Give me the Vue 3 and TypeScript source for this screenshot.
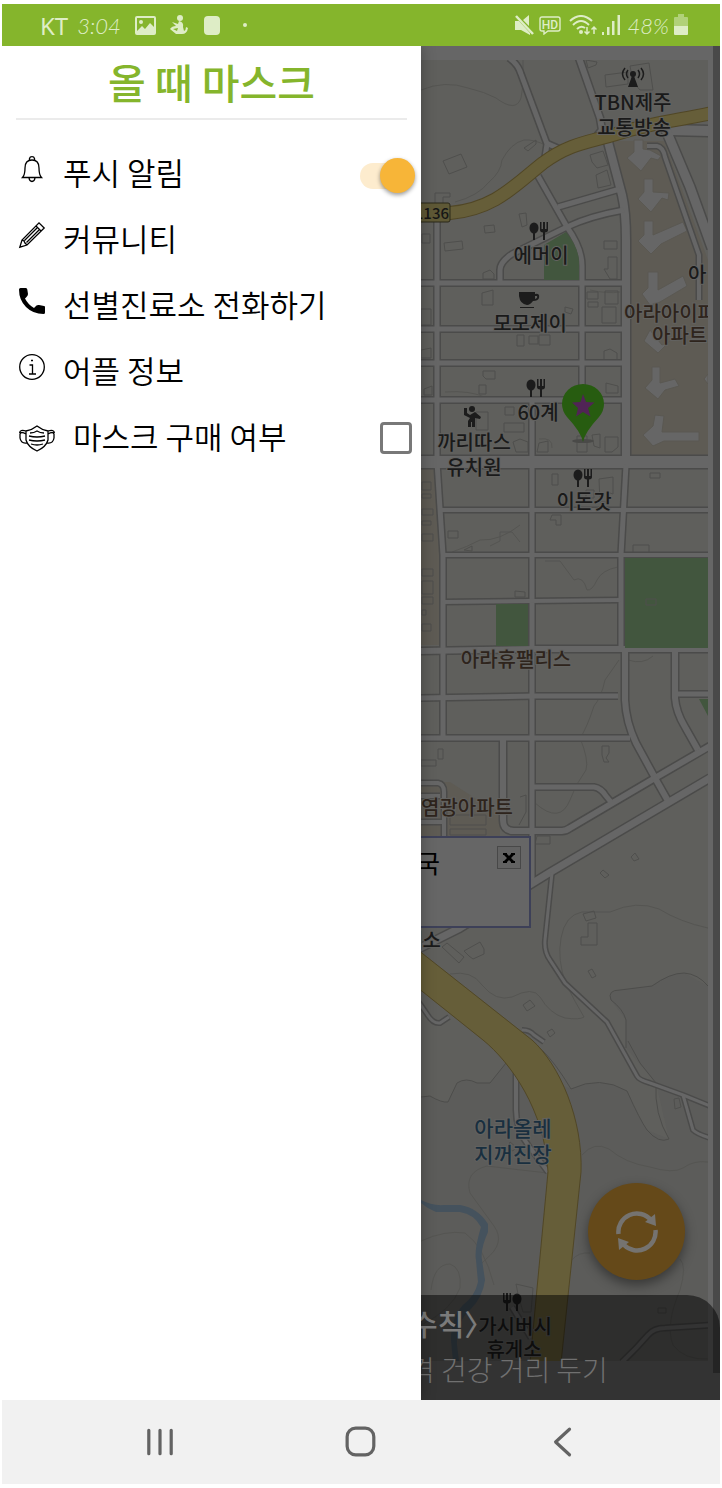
<script setup lang="ts">
import { ref } from 'vue'

interface Line { d: string; w: number }
interface Label { x: number; y: number; t: string; kind?: string; anchor?: string }
interface Poi { x: number; y: number; flip?: boolean }

const push = ref(true)
const bought = ref(false)

const roads: Line[] = [
  { d: 'M509 58Q518 64 521 74L547 144L544 164', w: 5 },
  { d: 'M546 143L562 150', w: 5 },
  { d: 'M579 58L600 118L602 130L592 142', w: 6 },
  { d: 'M608 142L622 195Q626 212 626 240V462', w: 8 },
  { d: 'M670 130L710 131', w: 10 },
  { d: 'M666 130L690 187L712 248', w: 9 },
  { d: 'M647 146H657Q663 147 665 157L699 255V300', w: 4 },
  { d: 'M538 176L567 227Q582 248 582 266V400', w: 5 },
  { d: 'M558 207L620 189', w: 5 },
  { d: 'M500 283V270Q500 262 512 254L567 227Q590 216 624 210', w: 5 },
  { d: 'M418 283H627', w: 5 },
  { d: 'M437 215V462L443 555V737', w: 5 },
  { d: 'M418 329H625M418 363H625M418 400H625', w: 5 },
  { d: 'M418 462H710', w: 12 },
  { d: 'M532 400V880', w: 5 },
  { d: 'M626 465L621 555V648', w: 5 },
  { d: 'M440 510H710M442 555H710M443 602L620 600', w: 4 },
  { d: 'M418 651L535 649H710', w: 6 },
  { d: 'M418 698L535 696H618M418 738H630', w: 5 },
  { d: 'M625 650V700Q626 722 636 743L654 776', w: 6 },
  { d: 'M675 650V698Q676 712 685 727L698 750', w: 6 },
  { d: 'M678 694H710', w: 5 },
  { d: 'M503 738V820Q503 831 514 831H562Q566 831 570 828L655 778L710 746', w: 6 },
  { d: 'M532 787H594Q601 788 606 796L611 802', w: 5 },
  { d: 'M655 778L668 801', w: 6 },
  { d: 'M416 950L460 928L549 873L710 778', w: 7 },
  { d: 'M418 783H438Q444 784 444 792V836M444 822H420M420 796H440', w: 4 },
  { d: 'M552 873L545 940Q544 952 550 960L565 983L607 1022L637 1076Q639 1080 650 1083L683 1095L710 1106', w: 3 },
  { d: 'M683 1095L693 1130Q697 1134 710 1138', w: 3 },
  { d: 'M416 998L427 1014Q433 1024 440 1023L449 1017', w: 3 },
  { d: 'M522 1030Q530 1030 534 1035L544 1042', w: 3 },
  { d: 'M516 1068V1110Q516 1130 528 1145L548 1172', w: 4 },
  { d: 'M710 1325L665 1328Q654 1328 648 1335Q636 1349 622 1362', w: 4 },
  { d: 'M512 1307L531 1338', w: 4 },
]

const contours: string[] = [
  'M421 90Q445 80 468 88Q485 92 496 98Q516 113 521 98Q524 85 523 70V60',
  'M455 202Q478 196 489 182Q501 172 502 160Q511 143 524 140Q534 139 547 146',
  'M452 552Q467 547 480 540Q500 541 520 525',
  'M545 561H560L574 580Q583 575 587 590Q592 591 597 580Q602 570 618 567',
  'M619 660L605 680Q601 698 594 706Q586 730 580 738Q589 760 586 770Q575 785 570 800Q560 825 535 803',
  'M450 974Q472 970 482 985Q496 1002 512 997Q533 986 540 997Q550 1014 565 1018Q580 1020 584 1017Q575 1002 566 984Q557 960 561 938Q565 915 582 912H610Q637 900 659 909Q680 922 708 928',
  'M582 1155Q594 1141 609 1149Q625 1163 650 1167Q673 1174 683 1168Q694 1160 708 1162',
  'M548 1173Q520 1170 487 1166Q464 1172 470 1193L494 1226Q506 1243 486 1259Q475 1266 481 1290',
  'M421 1241Q445 1230 465 1233Q484 1246 494 1285M431 1290Q434 1264 450 1264Q462 1268 460 1288Q452 1310 421 1325',
  'M572 1260Q578 1252 590 1253M680 1259Q687 1266 680 1290Q665 1325 673 1345Q684 1360 708 1359',
  'M590 290Q608 294 620 292M445 392Q470 390 487 398M539 439Q553 437 552 448M490 546L500 541V532H512L520 542',
  'M628 660Q643 665 653 656',
]
const ridges: string[] = [
  'M421 1097L430 1096Q442 1103 448 1102L457 1083Q466 1077 477 1083H490L506 1063',
  'M540 1048Q555 1062 571 1089Q600 1075 627 1091Q640 1120 647 1130Q659 1144 669 1139Q654 1114 656 1083L640 1063L628 1041',
  'M626 1048V1020Q623 1009 611 1000Q607 990 620 990L652 986Q670 973 684 973Q698 974 708 986',
]

const buildings: string[] = [
  'M443 161L461 154L467 167L449 174Z', 'M435 199V193H450V197H443V205H435Z', 'M519 214L526 213L527 225L522 227Z', 'M484 226L494 225L495 232L485 233Z',
  'M444 243L462 241L463 249L445 251Z', 'M483 273L490 270L494 274V279H483Z', 'M524 148L536 140V144L528 151Z', 'M605 75L628 72V84L606 87ZM630 66L649 63L653 90H640L633 82Z',
  'M586 60L597 62L596 65L588 68Z', 'M590 155L603 151L608 165L597 168L592 162ZM596 175L607 170L611 185L598 188Z', 'M604 241H617V249H604Z', 'M608 257H617V279H610L604 269H608Z',
  'M482 293L493 290V305H482Z', 'M587 292H598V299H587ZM588 302H598V307H588ZM605 291H618V304H605Z', 'M602 307H616V323H602Z', 'M565 307L573 309L571 314L565 312Z',
  'M517 335H524V346H517ZM529 336H538V344H529ZM539 335H550V345H539Z', 'M604 351L610 349L617 353V360H604Z', 'M483 371H495V379H486L483 376ZM479 385H486V394H479Z', 'M606 383L618 386V393H606Z',
  'M476 412H488V430H476ZM505 407H514V415H505ZM504 423H524V432H504ZM513 442L520 439L528 442V452H516Z', 'M539 443L548 441V452H537Z', 'M577 436H587V452H577ZM592 435L600 434V448L594 446ZM605 437H618V447L612 452H605Z',
  'M552 474H558V485H552ZM599 479L613 477V494L607 492V502H600ZM586 490H594V498H586Z', 'M650 473H660V478H650Z', 'M552 515H561V525H556V520H550ZM448 531H458V538H448ZM464 550L472 546V551Z', 'M633 545H649V553H633Z',
  'M515 591L525 592V597H515Z', 'M422 569H433V576H422ZM422 581H433V594H422ZM422 597H433V604H422ZM422 610H426V615H422ZM422 624H431V631H422Z', 'M422 482H431V490H422ZM422 494H431V498H422ZM422 509H433V515H422ZM422 521H431V525H422ZM422 534H433V541H422Z',
  'M438 749H443V759H438ZM421 760H436V766H421Z', 'M602 746H609V753L606 758L609 762H604L602 755Z', 'M450 815H486V825H450ZM450 829H486V835H450Z', 'M520 797L526 795V812L519 825',
  'M635 853L639 859L634 861L631 857ZM603 870L609 875L605 878L600 873Z', 'M537 836L550 836V844H535Z', 'M583 914L594 911L596 918L586 921ZM588 923H597V945H581V937H588Z', 'M442 947L447 943L464 957L459 963Z', 'M464 951L480 942L484 949L484 954L473 959L469 956Z',
  'M588 971L592 969L596 976L592 978ZM523 1005L530 1000L535 1006L527 1011ZM547 1032L552 1029L555 1033L550 1037Z', 'M674 1099L679 1098L681 1107L675 1109Z', 'M658 1308H666V1313H658Z', 'M516 1284L533 1288L531 1312H523L518 1294Z', 'M421 309H431V325H421ZM421 350L431 348V358H421ZM424 389L432 386V395H424Z', 'M422 234H430V243H422Z', 'M510 1142L516 1147L513 1151L508 1148Z',
]
const towers: string[] = [
  'M634 140H643V149L650 150L661 156L658 160L651 158L641 171L627 158L634 152Z',
  'M644 179H653V192L669 193L668 200L662 198L651 212L638 199L644 192Z',
  'M644 221H653V235L683 222L687 231L661 244L651 254L638 241L644 235Z',
  'M648 272H658V290L683 276L687 286L660 302L650 305L642 294L648 288Z',
  'M652 367H660V383L675 379L679 386L665 390L658 399L645 388L652 380Z',
  'M655 415L664 416L662 432H699V441H664L653 446L643 435L653 426Z',
  'M650 330L662 345L670 341L658 353L644 341Z',
  'M708 374L704 379L708 384Z',
]

const labels: Label[] = [
  { x: 633, y: 110, t: 'TBN제주' }, { x: 634, y: 135, t: '교통방송' }, { x: 541, y: 263, t: '에머이' },
  { x: 530, y: 331, t: '모모제이' }, { x: 538, y: 420, t: '60계' }, { x: 474, y: 450, t: '까리따스' }, { x: 474, y: 475, t: '유치원' },
  { x: 584, y: 509, t: '이돈갓' }, { x: 688, y: 282, t: '아', anchor: 'start' },
  { x: 624, y: 321, t: '아라아이파', kind: 'brown', anchor: 'start' }, { x: 652, y: 343, t: '아파트', kind: 'brown', anchor: 'start' },
  { x: 516, y: 667, t: '아라휴팰리스', kind: 'brown' }, { x: 421, y: 815, t: '염광아파트', kind: 'brown', anchor: 'start' },
  { x: 441, y: 948, t: '휴게소', anchor: 'end' },
  { x: 513, y: 1136, t: '아라올레', kind: 'blue' }, { x: 513, y: 1162, t: '지꺼진장', kind: 'blue' },
  { x: 515, y: 1334, t: '가시버시' }, { x: 514, y: 1357, t: '휴게소' },
]
const diners: Poi[] = [{ x: 529, y: 222 }, { x: 526, y: 379 }, { x: 573, y: 469 }, { x: 502, y: 1293, flip: true }]
</script>

<template>
  <div class="phone">
    <header class="status">
      <div class="status-side">
        <span class="carrier">KT</span>
        <span class="clock">3:04</span>
        <svg class="s-picture" viewBox="0 0 21 19" aria-hidden="true"><path fill-rule="evenodd" d="M2 0H19Q21 0 21 2V17Q21 19 19 19H2Q0 19 0 17V2Q0 0 2 0ZM2 2V15L7 10L10 13L15 7L19 11V2Z" /><circle cx="6" cy="6" r="2" /></svg>
        <svg class="s-figure" viewBox="0 0 18 20" aria-hidden="true"><circle cx="10" cy="3" r="3" /><path d="M9 6Q14 7 13 12L14 16Q16 15 16 12L18 13Q17 19 12 19H6L0 14Q2 11 6 11L2 7L8 9ZM3 14L7 16L8 13Z" fill-rule="evenodd" /></svg>
        <svg class="s-card" viewBox="0 0 16 19" aria-hidden="true"><rect width="16" height="19" rx="4" /></svg>
        <i class="dot"></i>
      </div>
      <div class="status-side">
        <svg class="s-mute" viewBox="0 0 19 21" aria-hidden="true"><path d="M0 6H4L15 18V20L6 15H0ZM8 5L14 0V11Z" /><path d="M1 1L18 19" stroke="#deedc6" stroke-width="2.500" /></svg>
        <svg class="s-hd" viewBox="0 0 22 19" aria-hidden="true"><path d="M3 1H19Q21 1 21 3V13Q21 15 19 15H9L5 18V15H3Q1 15 1 13V3Q1 1 3 1Z" fill="none" stroke="#deedc6" stroke-width="1.4" /><text x="11" y="13" text-anchor="middle">HD</text></svg>
        <svg class="s-wifi" viewBox="0 0 28 21" aria-hidden="true"><g fill="none" stroke="#deedc6" stroke-width="2"><path d="M1 6Q12 -4 23 6M4 10Q12 2 20 10M8 14Q12 10 16 13" /><path d="M18 12V19M15.500 16.500L18 19L20.500 16.500M25 19V12M22.500 14.500L25 12L27.500 14.500" stroke-width="1.5" /></g><circle cx="12" cy="17" r="2" /></svg>
        <svg class="s-signal" viewBox="0 0 18 20" aria-hidden="true"><path d="M0 17H2V20H0ZM5 12H7.500V20H5ZM10 6H12.500V20H10ZM15.500 0H18V20H15.500Z" /></svg>
        <span class="clock">48%</span>
        <svg class="s-battery" viewBox="0 0 14 22" aria-hidden="true"><path opacity=".5" d="M4 0H10V3H13Q14 3 14 4V12H0V4Q0 3 1 3H4Z" /><path d="M0 12H14V20Q14 21 13 21H1Q0 21 0 20Z" /></svg>
      </div>
    </header>

    <main class="stage">
      <aside class="drawer">
        <h1>올 때 마스크</h1>
        <ul class="menu">
          <li>
            <label class="row">
              <svg class="icon" viewBox="0 0 26 26" aria-hidden="true"><path d="M10.500 4.500V2.500Q11 .6 13 .6T15.500 2.500V4.500M3.500 21.500Q6 19 6 12Q6 4 13 4T20 12Q20 19 22.500 21.500ZM10 22Q10.500 25.500 13 25.500T16 22" /></svg>
              <span>푸시 알림</span>
              <input v-model="push" class="switch" type="checkbox" role="switch" />
            </label>
          </li>
          <li>
            <a class="row" href="#community">
              <svg class="icon" viewBox="0 0 26 26" aria-hidden="true"><path d="M.8 25.200L3 18L20 .8L25.200 6L8 23ZM3 18L5 19L6 21L8 23M17 4L22 9M5.500 18.500L18 6M7.500 20.500L20 8M1 24L2 25" /></svg>
              <span>커뮤니티</span>
            </a>
          </li>
          <li>
            <a class="row" href="#call">
              <svg class="icon solid" viewBox="0 0 26 26" aria-hidden="true"><path d="M1.500 0H7Q8 0 8.300 1.500L9 6Q9 7.500 7.500 9L6 10.500Q9 16.500 15 20L17.500 17.500Q18.500 16.700 20 17L25 18Q26 18.200 26 19V24.500Q26 26 24.500 26Q14 26 7 19T0 1.500Q0 0 1.500 0Z" /></svg>
              <span>선별진료소 전화하기</span>
            </a>
          </li>
          <li>
            <a class="row" href="#about">
              <svg class="icon" viewBox="0 0 26 26" aria-hidden="true"><circle cx="13" cy="13" r="12.300" /><path d="M10.500 11H13.500V20M10 20H17M12 6.500H14" /></svg>
              <span>어플 정보</span>
            </a>
          </li>
          <li>
            <label class="row">
              <svg class="icon mask" viewBox="0 0 36 28" aria-hidden="true"><path d="M7 7Q13 6 18 2Q23 6 29 7V16Q27 23 18 27Q9 23 7 16ZM7 10Q2 7 1 10V14Q2 20 8 19M7 7Q1 5 .6 9M29 10Q34 7 35 10V14Q34 20 28 19M29 7Q35 5 35.400 9M11 9Q15 9 18 7Q21 9 25 9M10 12Q18 14 26 12M10 16Q18 18 26 16M12 20Q18 22 24 20" /></svg>
              <span>마스크 구매 여부</span>
              <input v-model="bought" class="tick" type="checkbox" />
            </label>
          </li>
        </ul>
      </aside>

      <section class="pane">
        <svg class="map" viewBox="421 60 287 1301" role="img" aria-label="지도">
          <rect class="land" x="421" y="60" width="287" height="1301" />
          <path class="estate" d="M613 141H664L708 260V456H630V230ZM421 468H436L440 550V645H421ZM421 782H450L478 800L500 812V836H421Z" />
          <path class="hill" d="M421 1097L430 1096Q442 1103 448 1102L457 1083Q466 1077 477 1083H490L506 1063L571 1089Q600 1075 627 1091Q640 1120 647 1130L669 1139L656 1083L626 1048V1020L611 1000Q607 990 620 990L652 986Q670 973 684 973L708 986V1361H421Z" />
          <path v-for="d in contours" :key="d" class="contour" :d="d" />
          <path v-for="d in ridges" :key="d" class="ridge" :d="d" />
          <path v-for="d in buildings" :key="d" class="building" :d="d" />
          <path v-for="d in towers" :key="d" class="tower" :d="d" />
          <path class="water" d="M421 1200Q432 1206 444 1205H460Q478 1208 488 1224V1232Q480 1250 482 1260L485 1280Q483 1297 470 1310Q456 1322 457 1345L459 1361H453L451 1340Q451 1318 463 1305Q475 1296 478 1282L476 1260Q474 1250 481 1227Q474 1214 460 1212H436Q428 1209 421 1203Z" />
          <path v-for="r in roads" :key="r.d" class="casing" :d="r.d" :stroke-width="r.w + 3" />
          <path v-for="r in roads" :key="r.w + r.d" class="road" :d="r.d" :stroke-width="r.w" />
          <path class="park" d="M544 245L566 232Q579 248 579 262V280H544ZM496 604H528V646H496ZM625 558H708V648H625ZM699 699H708V716Z" />
          <path class="building" d="M646 599H656V605H646Z" />
          <path class="highway-casing" d="M415 213H450C495 209 515 185 543 163C570 143 590 142 616 134C650 123 680 120 712 113" />
          <path class="highway" d="M415 213H450C495 209 515 185 543 163C570 143 590 142 616 134C650 123 680 120 712 113" />
          <path class="highway-area" d="M418 988L483 1040C510 1062 545 1110 548 1172L530 1363H561L581 1172C583 1120 560 1065 532 1040L418 950Z" />

          <rect class="shield" x="414" y="203" width="36" height="19" rx="2" />
          <text class="route" x="449" y="219" text-anchor="end">1136</text>

          <g v-for="p in diners" :key="p.y" class="glyph" :transform="`translate(${p.x} ${p.y})`">
            <g :transform="p.flip ? 'translate(20 0) scale(-1 1)' : undefined">
              <ellipse cx="5" cy="6" rx="4.500" ry="5.500" /><path d="M4 10H6V18H4ZM11 0H12.500V7H14V0H16V7H17.500V0H19V8Q19 10 16 10.500V18H14V10.500Q11 10 11 8Z" />
            </g>
          </g>
          <g class="glyph">
            <path d="M519 292H535V294Q540 293 539 298Q538 301 533 301Q530 305 527 305Q520 304 519 296ZM535 296V299Q538 298 537 296ZM520 307H534V308H520Z" fill-rule="evenodd" />
            <circle cx="633" cy="74" r="3" /><path d="M632 76H634L638 87H628Z" />
            <path class="wave" d="M628 70Q625 74 628 78M625 68Q620 74 625 80M638 70Q641 74 638 78M641 68Q646 74 641 80" />
            <circle cx="472" cy="409" r="3" /><path d="M464 408H467V413L470 415L475 412L481 417L480 419L475 418V427H472V422H471V427H468V421L470 418L464 415Z" />
          </g>

          <text v-for="(l, i) in labels" :key="i" class="label" :class="l.kind" :x="l.x" :y="l.y" :text-anchor="l.anchor ?? 'middle'">{{ l.t }}</text>

          <ellipse class="pin-shade" cx="583" cy="441" rx="11" ry="2" />
          <path class="pin" d="M583 442Q581 432 567 417Q562 411 562 404A21 20 0 0 1 604 404Q604 411 599 417Q585 432 583 442Z" />
          <path class="star" d="M583 394L586 402L594.500 402.500L588 408L590.500 416.500L583 412L576 416.500L578 408L572 402.500L580.500 402Z" />
        </svg>

        <div class="info">
          <strong>약국</strong>
          <button type="button" aria-label="닫기"><svg viewBox="0 0 12 10" aria-hidden="true"><path d="M0 0H4V1L6 3L8 1V0H12V2H11L8 5L11 8H12V10H8V9L6 7L4 9V10H0V8H1L4 5L1 2H0Z" /></svg></button>
        </div>

        <i class="scroll"></i>
        <button class="refresh" type="button" aria-label="새로고침">
          <svg viewBox="0 0 42 42" aria-hidden="true"><path class="arc" d="M2.500 23A18.500 18.500 0 0 1 35 9M39.500 19A18.500 18.500 0 0 1 8 34" /><path d="M39 3L40 15L29 11ZM2 27L3 39L13 31Z" /></svg>
        </button>
        <div class="tips">
          <b>수칙〉</b>
          <span>격 건강 거리 두기</span>
        </div>
      </section>
    </main>

    <nav class="keys">
      <button type="button" aria-label="최근 앱"><svg viewBox="0 0 30 30" aria-hidden="true"><path d="M4.500 4V26M15 4V26M25.500 4V26" /></svg></button>
      <button type="button" aria-label="홈"><svg viewBox="0 0 30 30" aria-hidden="true"><rect x="2" y="2" width="25" height="25" rx="8" /></svg></button>
      <button type="button" aria-label="뒤로"><svg viewBox="0 0 30 30" aria-hidden="true"><path d="M22 3L9 15L22 27" /></svg></button>
    </nav>
  </div>
</template>

<style>
body { margin: 0; background: #fff; }
</style>

<style scoped>
.phone { padding: 4px 2px; font-family: "Noto Sans CJK KR", "Noto Sans", sans-serif; color: #000; }
button { border: 0; padding: 0; background: none; cursor: pointer; }

.status { display: flex; justify-content: space-between; height: 42px; padding: 0 32px 0 38px; background: #85b52c; color: #deedc6; }
.status svg { fill: #deedc6; flex: none; }
.status-side { display: flex; align-items: center; }
.carrier { font: 400 24px "Noto Sans", sans-serif; margin-right: 9px; }
.clock { font: italic 300 22px Lato, sans-serif; }
.s-picture { width: 21px; height: 19px; margin-left: 14px; }
.s-figure { width: 18px; height: 20px; margin-left: 14px; }
.s-card { width: 16px; height: 19px; margin-left: 16px; }
.dot { width: 4px; height: 4px; border-radius: 50%; background: #deedc6; margin-left: 23px; }
.s-mute { width: 19px; height: 21px; }
.s-hd { width: 22px; height: 19px; margin-left: 5px; }
.s-hd text { font: 500 12px Roboto, sans-serif; }
.s-wifi { width: 28px; height: 21px; margin-left: 8px; }
.s-signal { width: 18px; height: 20px; margin: 0 8px 0 5px; }
.s-battery { width: 14px; height: 22px; margin-left: 5px; }

.stage { display: grid; grid-template-columns: 419fr 299fr; overflow: hidden; }
.drawer { position: relative; z-index: 2; background: #fff; box-shadow: 0 0 14px rgba(0, 0, 0, .3); }
h1 { margin: 0 14px; height: 72px; border-bottom: 2px solid #ebebeb; text-align: center; font-size: 41px; font-weight: 500; line-height: 70px; color: #85b52c; }
.menu { list-style: none; margin: 0; padding: 21px 7px 0 17px; }
.row { display: flex; align-items: center; gap: 18px; height: 66px; font-size: 31px; font-weight: 350; color: #000; text-decoration: none; }
.row span { padding-bottom: 5px; }
.icon { width: 26px; height: 26px; margin-bottom: 10px; flex: none; fill: none; stroke: #000; stroke-width: 1.3; overflow: visible; }
.icon.solid { fill: #000; stroke: none; }
.icon.mask { width: 36px; height: 28px; margin: 0; }
input { appearance: none; flex: none; margin: 0 0 0 auto; cursor: pointer; }
.switch { position: relative; width: 54px; height: 26px; border-radius: 13px; background: #ddd; margin-top: 4px; }
.switch:checked { background: #fdecce; }
.switch::after { content: ""; position: absolute; top: -5px; left: 0; width: 35px; height: 35px; border-radius: 50%; background: #fff; box-shadow: 0 2px 4px rgba(0, 0, 0, .4); }
.switch:checked::after { left: 20px; background: #f7b538; }
.tick { width: 32px; height: 32px; border: 3px solid #787878; border-radius: 4px; margin-right: 2px; }
.tick:checked { background: #f7b538; }

.pane { position: relative; overflow: hidden; background: #666; padding: 14px 12px 39px 0; }
.map { display: block; width: 100%; height: auto; }
.land { fill: #5f5f5c; }
.hill { fill: #5c5c5a; }
.estate { fill: #5e5b54; }
.contour, .ridge { fill: none; stroke: #555552; stroke-width: 1; }
.ridge { stroke: #4d4d4b; }
.building { fill: none; stroke: #4f4f4d; stroke-width: 1; }
.tower { fill: #666; stroke: #5a5852; stroke-width: 1; }
.casing, .road { fill: none; stroke-linejoin: round; }
.casing { stroke: #4b4b4a; }
.road { stroke: #666; }
.park { fill: #42563e; }
.water { fill: #45525d; }
.highway-casing { fill: none; stroke: #514726; stroke-width: 14; }
.highway { fill: none; stroke: #665e39; stroke-width: 12; }
.highway-area { fill: #665e39; stroke: #514726; stroke-width: 1; }
.shield { fill: #5f5936; stroke: #2a2818; stroke-width: 1; }
.route { font: 500 15px "Noto Sans CJK KR", sans-serif; fill: #161616; }
.glyph { fill: #1c1c1c; }
.wave { fill: none; stroke: #1c1c1c; stroke-width: 1.5; }
.label { font-size: 20px; font-weight: 500; fill: #1a1a1a; stroke: #626260; stroke-width: 2; paint-order: stroke; }
.label.brown { fill: #2e241c; }
.label.blue { font-size: 21px; fill: #192f3f; }
.pin { fill: #275c10; }
.pin-shade { fill: #4a4a48; }
.star { fill: #512456; }

.info { position: absolute; top: 790px; left: -40px; box-sizing: border-box; display: flex; justify-content: space-between; align-items: flex-start; width: 150px; height: 92px; padding: 8px; background: #666; border: 2px solid #3d4058; }
.info strong { width: 49px; text-align: right; font-size: 25px; font-weight: 400; line-height: 32px; }
.info button { display: grid; place-items: center; box-sizing: border-box; width: 24px; height: 23px; border: 1px solid #484848; background: #626262; }
.info button svg { width: 12px; height: 10px; }
.scroll { position: absolute; top: 0; right: 0; bottom: 27px; width: 7px; background: #494949; }
.refresh { position: absolute; right: 35px; bottom: 120px; display: grid; place-items: center; width: 97px; height: 97px; border-radius: 50%; background: #654919; box-shadow: 0 5px 12px rgba(0, 0, 0, .4); }
.refresh svg { width: 42px; height: 42px; fill: #757370; }
.refresh .arc { fill: none; stroke: #757370; stroke-width: 4.5; }
.tips { position: absolute; left: 0; right: 0; bottom: 0; box-sizing: border-box; display: flex; flex-direction: column; height: 105px; padding-top: 5px; border-top-right-radius: 33px; background: rgba(0, 0, 0, .5); color: #707070; line-height: 46px; white-space: nowrap; }
.tips b { margin-left: -10px; font-size: 29px; font-weight: 500; color: #7b7b7b; }
.tips span { margin-left: -12px; font-size: 28px; font-weight: 300; }

.keys { display: grid; grid-template-columns: repeat(3, 1fr); height: 84px; padding: 0 8%; background: #f1f1f1; }
.keys svg { width: 32px; height: 32px; fill: none; stroke: #636363; stroke-width: 3; stroke-linecap: round; stroke-linejoin: round; }
.keys button { display: grid; place-items: center; }
</style>
